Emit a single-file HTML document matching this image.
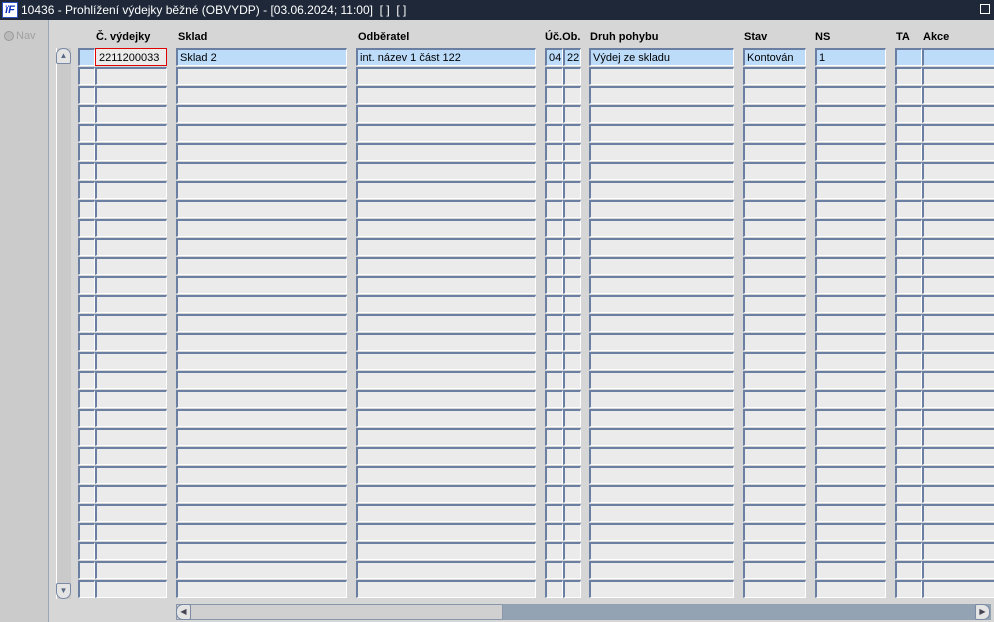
<!DOCTYPE html>
<html><head><meta charset="utf-8"><style>
*{margin:0;padding:0;box-sizing:border-box}
body{width:994px;height:622px;overflow:hidden;background:#d6d6d6;font-family:"Liberation Sans",Arial,sans-serif;font-size:11px;color:#000;position:relative}
.abs{position:absolute}
#title{left:0;top:0;width:994px;height:20px;background:#1e2838;color:#fff;font-size:12px;line-height:20px;padding-left:21px}
#logo{left:2px;top:2px;width:16px;height:16px;background:#fff;border:1px solid #3050c0;color:#1030c0;font-weight:bold;font-style:italic;font-size:11px;line-height:14px;text-align:center}
#left{left:0;top:20px;width:49px;height:602px;background:#cbcbcb;border-right:1px solid #9aa6b8}
.f{position:absolute;height:18px;background:#ebebeb;border-top:2px solid #6b7fa3;border-left:2px solid #6b7fa3;border-right:1px solid #fff;border-bottom:1px solid #fff;padding-left:2px;line-height:16px;white-space:nowrap;overflow:hidden}
.h{position:absolute;top:31px;font-weight:bold;font-size:11px}
.sel{background:#bcdcfa}
</style></head><body>
<div id="title" class="abs">10436 - Prohlížení výdejky běžné (OBVYDP) - [03.06.2024; 11:00] &nbsp;[ ] &nbsp;[ ]</div>
<div id="logo" class="abs">ïF</div>
<div class="abs" style="right:4px;top:4px;width:10px;height:10px;border:1px solid #fff"></div>
<div id="left" class="abs"></div>
<div class="abs" style="left:4px;top:31px;width:10px;height:10px;border-radius:50%;background:#bbb;border:1px solid #999"></div>
<div class="abs" style="left:16px;top:30px;color:#a0a0a0;font-size:11px">Nav</div>
<div class="abs" style="left:56px;top:48px;width:1px;height:551px;background:#fff"></div>
<div class="abs" style="left:57px;top:48px;width:14px;height:551px;background:#cacaca"></div>
<div class="abs" style="left:56px;top:48px;width:15px;height:16px;border:1px solid #7a8aa5;border-radius:7px 7px 2px 2px;background:#e4e4e4;text-align:center;font-size:8px;color:#5a6a85;line-height:14px">▲</div>
<div class="abs" style="left:56px;top:583px;width:15px;height:16px;border:1px solid #7a8aa5;border-radius:2px 2px 7px 7px;background:#e4e4e4;text-align:center;font-size:8px;color:#5a6a85;line-height:14px">▼</div>
<div class="h" style="left:96px">Č. výdejky</div>
<div class="h" style="left:178px">Sklad</div>
<div class="h" style="left:358px">Odběratel</div>
<div class="h" style="left:545px">Úč.Ob.</div>
<div class="h" style="left:590px">Druh pohybu</div>
<div class="h" style="left:744px">Stav</div>
<div class="h" style="left:815px">NS</div>
<div class="h" style="left:896px">TA</div>
<div class="h" style="left:923px">Akce</div>
<div id="grid"></div>
<div class="abs" style="left:176px;top:604px;width:815px;height:16px;background:#94a3b4"></div>
<div class="abs" style="left:176px;top:604px;width:327px;height:16px;background:#d0d0d0;border:1px solid #8a96aa"></div>
<div class="abs" style="left:176px;top:604px;width:15px;height:16px;background:#e4e4e4;border:1px solid #7a8aa5;border-radius:7px 2px 2px 7px;font-size:8px;color:#445;line-height:14px;text-align:center">◀</div>
<div class="abs" style="left:975px;top:604px;width:15px;height:16px;background:#e4e4e4;border:1px solid #7a8aa5;border-radius:2px 7px 7px 2px;font-size:8px;color:#445;line-height:14px;text-align:center">▶</div>
<div class="f sel" style="left:78px;top:48px;width:17px"></div>
<div class="f" style="left:95px;top:48px;width:72px;background:#ebebeb;border:1px solid #e00000;padding-left:3px;line-height:18px">2211200033</div>
<div class="f sel" style="left:176px;top:48px;width:171px">Sklad 2</div>
<div class="f sel" style="left:356px;top:48px;width:180px">int. název 1 část 122</div>
<div class="f sel" style="left:545px;top:48px;width:18px">04</div>
<div class="f sel" style="left:563px;top:48px;width:18px">22</div>
<div class="f sel" style="left:589px;top:48px;width:145px">Výdej ze skladu</div>
<div class="f sel" style="left:743px;top:48px;width:63px">Kontován</div>
<div class="f sel" style="left:815px;top:48px;width:71px">1</div>
<div class="f sel" style="left:895px;top:48px;width:27px"></div>
<div class="f sel" style="left:922px;top:48px;width:75px"></div>
<script>
var cols=[[78,17],[95,72],[176,171],[356,180],[545,18],[563,18],[589,145],[743,63],[815,71],[895,27],[922,75]];
var h='';
for(var r=1;r<29;r++){var y=48+r*19;for(var c=0;c<cols.length;c++){h+='<div class="f" style="left:'+cols[c][0]+'px;top:'+y+'px;width:'+cols[c][1]+'px"></div>';}}
document.getElementById('grid').innerHTML=h;
</script>
</body></html>
